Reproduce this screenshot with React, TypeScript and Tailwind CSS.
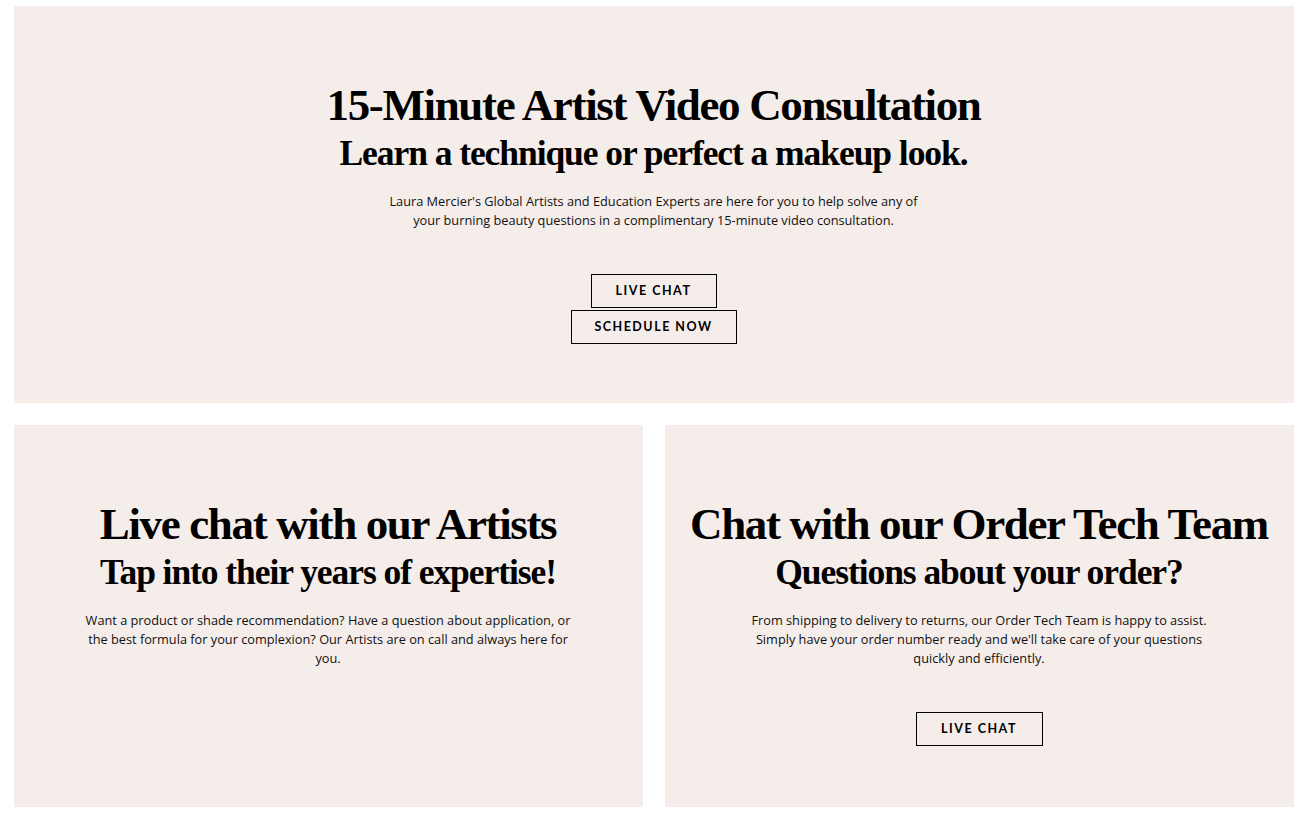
const serif = "font-['Liberation_Serif',serif]";
const sans = "font-['Open_Sans','Lato',sans-serif]";

function OutlineButton({ label, className = "" }: { label: string; className?: string }) {
  return (
    <button
      className={`border border-black bg-transparent h-[34px] text-[12.5px] font-bold tracking-[0.12em] text-black font-['Lato',sans-serif] ${className}`}
    >
      {label}
    </button>
  );
}

function Panel({
  title,
  subtitle,
  body,
  buttons,
  bodyWidth,
  className = "",
}: {
  title: string;
  subtitle: string;
  body: string;
  buttons: { label: string; width: string }[];
  bodyWidth: string;
  className?: string;
}) {
  return (
    <section className={`bg-[#f5edea] flex flex-col items-center text-center pt-[74px] ${className}`}>
      <h2 className={`${serif} font-bold text-[45px] leading-[50px] tracking-[-0.03em] text-black`}>{title}</h2>
      <h3 className={`${serif} font-bold text-[35.5px] leading-[44px] tracking-[-0.03em] text-black mt-[1px]`}>
        {subtitle}
      </h3>
      <p className={`${sans} text-[12.75px] leading-[19px] text-[#111] mt-[17px] ${bodyWidth}`}>{body}</p>
      {buttons.length > 0 && (
        <div className="flex flex-col items-center gap-[2px] mt-[44px]">
          {buttons.map((b) => (
            <OutlineButton key={b.label} label={b.label} className={b.width} />
          ))}
        </div>
      )}
    </section>
  );
}

export default function App() {
  return (
    <div className="bg-white min-h-screen pt-[6px]">
      <div className="w-[1280px] mx-auto flex flex-col gap-[22px]">
        <Panel
          className="h-[397px]"
          title="15-Minute Artist Video Consultation"
          subtitle="Learn a technique or perfect a makeup look."
          body="Laura Mercier's Global Artists and Education Experts are here for you to help solve any of your burning beauty questions in a complimentary 15-minute video consultation."
          bodyWidth="w-[548px]"
          buttons={[
            { label: "LIVE CHAT", width: "w-[126px]" },
            { label: "SCHEDULE NOW", width: "w-[166px]" },
          ]}
        />
        <div className="grid grid-cols-2 gap-[22px]">
          <Panel
            className="h-[382px]"
            title="Live chat with our Artists"
            subtitle="Tap into their years of expertise!"
            body="Want a product or shade recommendation? Have a question about application, or the best formula for your complexion? Our Artists are on call and always here for you."
            bodyWidth="w-[498px]"
            buttons={[]}
          />
          <Panel
            className="h-[382px]"
            title="Chat with our Order Tech Team"
            subtitle="Questions about your order?"
            body="From shipping to delivery to returns, our Order Tech Team is happy to assist. Simply have your order number ready and we'll take care of your questions quickly and efficiently."
            bodyWidth="w-[472px]"
            buttons={[{ label: "LIVE CHAT", width: "w-[127px]" }]}
          />
        </div>
      </div>
    </div>
  );
}
